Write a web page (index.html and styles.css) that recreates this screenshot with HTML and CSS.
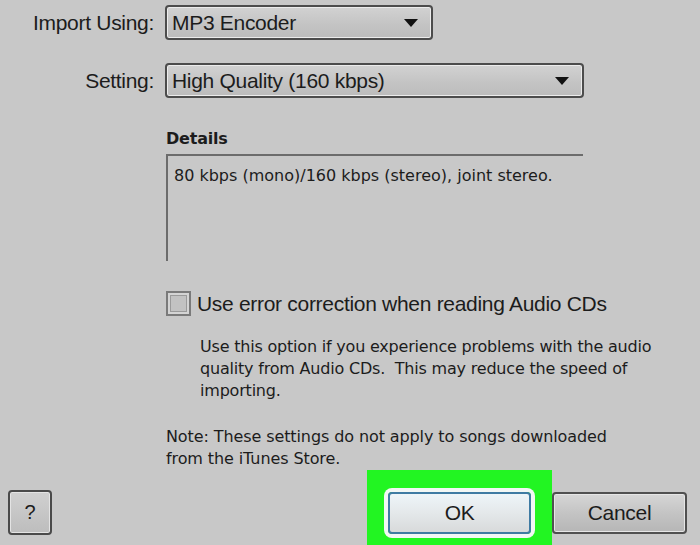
FILE: index.html
```html
<!DOCTYPE html>
<html lang="en">
<head>
  <meta charset="UTF-8" />
  <title>Import Settings</title>
  <link rel="stylesheet" href="styles.css">
</head>
<body>
  <div class="dialog">
    <!-- encoder and quality pickers -->
    <div class="field-row">
      <label class="field-label">Import Using:</label>
      <div class="select select-short">
        <span>MP3 Encoder</span>
        <span class="arrow"></span>
      </div>
    </div>
    <div class="field-row second">
      <label class="field-label">Setting:</label>
      <div class="select select-wide">
        <span>High Quality (160 kbps)</span>
        <span class="arrow"></span>
      </div>
    </div>

    <div class="indent">
      <div class="details-title">Details</div>
      <div class="details-box">80 kbps (mono)/160 kbps (stereo), joint stereo.</div>

      <div class="check-row">
        <span class="checkbox"></span>
        <span class="check-label">Use error correction when reading Audio CDs</span>
      </div>
      <p class="help">Use this option if you experience problems with the audio quality from Audio CDs.&nbsp; This may reduce the speed of importing.</p>

      <p class="note">Note: These settings do not apply to songs downloaded<br>from the iTunes Store.</p>
    </div>

    <!-- dialog buttons -->
    <div class="footer">
      <button class="btn btn-help">?</button>
      <div class="footer-right">
        <div class="highlight">
          <button class="btn btn-ok">OK</button>
        </div>
        <button class="btn btn-cancel">Cancel</button>
      </div>
    </div>
  </div>
</body>
</html>
```

FILE: styles.css
```css
body { margin: 0; background: #c8c8c8; color: #1c1c1c; font-family: "Liberation Sans", Arial, sans-serif; overflow: hidden; }
.dialog { width: 700px; height: 545px; padding-top: 5px; box-sizing: border-box; display: flex; flex-direction: column; }

.field-row { display: flex; align-items: center; }
.field-row.second { margin-top: 23px; }
.field-label { width: 154px; text-align: right; font-size: 21px; letter-spacing: -0.3px; margin-right: 11px; }
.select { height: 35px; box-sizing: border-box; border: 2px solid #4c4c4c; border-radius: 4px; background: linear-gradient(#d2d2d2, #c4c4c4 55%, #bcbcbc); box-shadow: inset 0 0 0 1px #ececec; display: flex; align-items: center; justify-content: space-between; padding: 0 13px 0 5px; font-size: 21px; letter-spacing: -0.3px; }
.select-short { width: 268px; }
.select-wide { width: 419px; }
.arrow { width: 0; height: 0; border-left: 7px solid transparent; border-right: 7px solid transparent; border-top: 8px solid #111; }

.indent { margin-left: 166px; font-family: "DejaVu Sans", sans-serif; font-size: 16px; }
.details-title { font-weight: bold; margin-top: 31px; line-height: 20px; letter-spacing: -0.2px; }
.details-box { width: 417px; height: 107px; box-sizing: border-box; margin-top: 5px; border-top: 2px solid #6c6c6c; border-left: 2px solid #6c6c6c; padding: 10px 0 0 6px; }

.check-row { display: flex; align-items: center; margin-top: 30px; font-family: "Liberation Sans", Arial, sans-serif; }
.checkbox { width: 25px; height: 25px; box-sizing: border-box; border: 2px solid #7a7a7a; box-shadow: inset 0 0 0 2px #d4d4d4, inset 0 0 0 3px #9a9a9a; background: #c2c2c2; margin-right: 6px; }
.check-label { font-size: 21px; letter-spacing: -0.3px; }

.help, .note { line-height: 22px; margin: 0; }
.help { width: 470px; margin: 20px 0 0 34px; letter-spacing: -0.2px; }
.note { margin-top: 24px; letter-spacing: -0.1px; }

.footer { display: flex; justify-content: space-between; align-items: flex-start; margin-top: auto; padding: 0 13px 0 8px; }
.footer-right { display: flex; align-items: flex-start; }
.btn { display: block; font-family: "Liberation Sans", Arial, sans-serif; font-size: 21px; letter-spacing: -0.3px; color: #1c1c1c; box-sizing: border-box; border-radius: 4px; padding: 0; }
.btn-help { width: 44px; height: 45px; margin-top: 20px; border: 2px solid #4a4a4a; background: linear-gradient(#d0d0d0, #bdbdbd); box-shadow: inset 0 0 0 1px #e4e4e4; font-size: 20px; }
.highlight { display: flex; background: #22f522; padding: 22px 21px 13px 21px; }
.btn-ok { width: 143px; height: 42px; border: 2px solid #3f7ba3; background: linear-gradient(#eef5f9, #e4e8ea 50%, #d8dadb); box-shadow: 0 0 0 4px #f2f7f5; }
.btn-cancel { width: 135px; height: 42px; margin-top: 22px; border: 2px solid #505050; background: linear-gradient(#d6d6d6, #c4c4c4 50%, #b6b6b6); box-shadow: inset 0 0 0 1px #e6e6e6; }
```
